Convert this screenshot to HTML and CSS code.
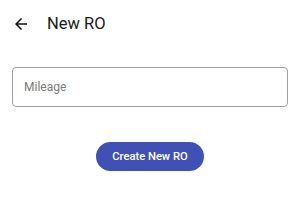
FILE: index.html
```html
<!DOCTYPE html>
<html>
<head>
<meta charset="utf-8">
<link rel="stylesheet" href="styles.css">
</head>
<body>
<div class="page">
  <header class="bar">
    <svg class="back" width="18" height="18" viewBox="0 0 24 24"><path d="M20 11H7.83l5.59-5.59L12 4l-8 8 8 8 1.41-1.41L7.83 13H20v-2z" fill="#111"/></svg>
    <h1 class="title">New RO</h1>
  </header>
  <div class="field">
    <span class="placeholder">Mileage</span>
  </div>
  <div class="actions">
    <button class="btn">Create New RO</button>
  </div>
</div>
</body>
</html>
```
FILE: styles.css
```css
html, body { margin: 0; padding: 0; background: #fff; }
body { font-family: Roboto, "Noto Sans", sans-serif; width: 300px; height: 212px; overflow: hidden; }
.page { display: flex; flex-direction: column; }
.bar { display: flex; align-items: center; height: 24px; margin-top: 12px; padding-left: 12px; }
.back { display: block; }
.title { margin: 0 0 0 17px; font-size: 16.5px; font-weight: 400; color: #1a1a1a; line-height: 24px; }
.field { margin: 31px 12px 0 12px; height: 38px; border: 1px solid #a0a0a0; border-radius: 4px; display: flex; align-items: center; padding-left: 11px; }
.placeholder { font-size: 12px; color: #7a7a7a; }
.actions { display: flex; justify-content: center; margin-top: 35px; }
.btn { width: 108px; height: 29px; border: none; border-radius: 15px; background: #3f51b5; color: #fff; font-family: Roboto, sans-serif; font-weight: 500; font-size: 11.2px; padding: 0; }
```
